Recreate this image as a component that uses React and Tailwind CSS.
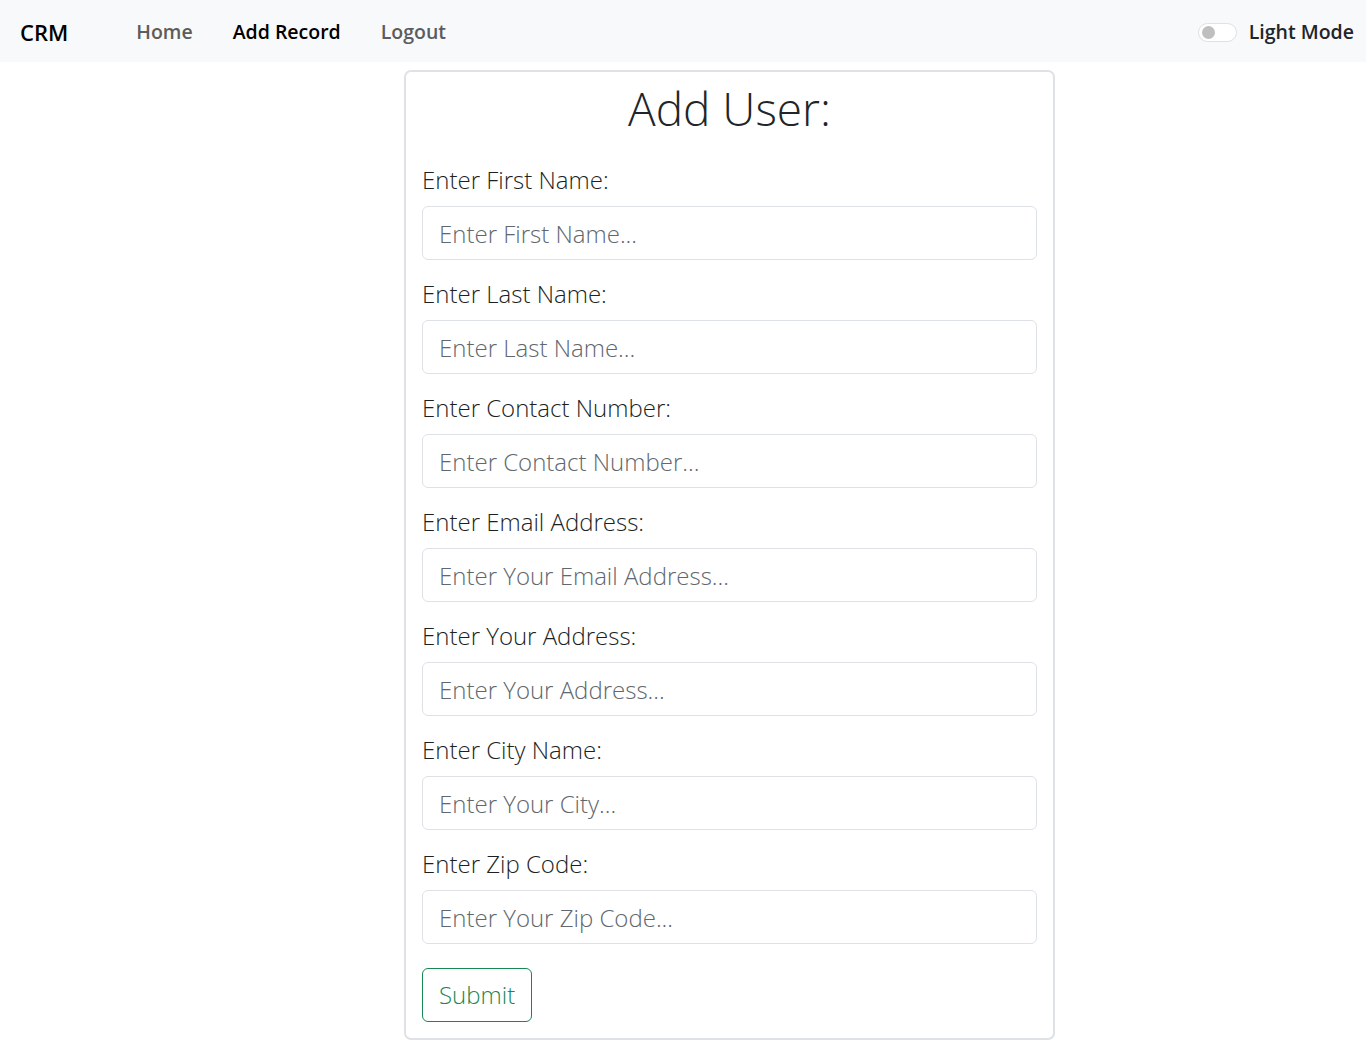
const fields = [
  { label: 'Enter First Name:', placeholder: 'Enter First Name...' },
  { label: 'Enter Last Name:', placeholder: 'Enter Last Name...' },
  { label: 'Enter Contact Number:', placeholder: 'Enter Contact Number...' },
  { label: 'Enter Email Address:', placeholder: 'Enter Your Email Address...' },
  { label: 'Enter Your Address:', placeholder: 'Enter Your Address...' },
  { label: 'Enter City Name:', placeholder: 'Enter Your City...' },
  { label: 'Enter Zip Code:', placeholder: 'Enter Your Zip Code...' },
];

export default function App() {
  return (
    <div className="min-h-screen bg-white text-[#212529] font-['Open_Sans',sans-serif]">
      {/* Navbar */}
      <nav className="h-[62px] bg-[#f8f9fa] flex items-center pl-5 pr-3 pt-[2px]">
        <span className="text-[22px] font-semibold text-black mr-[68px]">CRM</span>
        <a className="text-[19.5px] font-semibold text-[#5c5c5c] mr-[40px]">Home</a>
        <a className="text-[19.5px] font-semibold text-black mr-[40px]">Add Record</a>
        <a className="text-[19.5px] font-semibold text-[#5c5c5c]">Logout</a>
        <div className="ml-auto flex items-center gap-[12px]">
          <span className="w-[39px] h-[19px] rounded-full border border-[#dee2e6] bg-white flex items-center px-[3px]">
            <span className="w-[13px] h-[13px] rounded-full bg-[#bfbfbf]" />
          </span>
          <span className="text-[19.5px] font-semibold text-[#212529]">Light Mode</span>
        </div>
      </nav>

      {/* Card */}
      <div className="ml-[404px] mt-[8px] w-[651px] border-2 border-[#dee2e6] rounded-[7px] px-[16px] pb-[16px]">
        <h1 className="text-center text-[46px] font-light leading-[1.2] pt-[9px] pb-[26px]">Add User:</h1>
        <form className="flex flex-col">
          {fields.map((f) => (
            <div key={f.label} className="mb-[16px]">
              <label className="block text-[24px] font-light text-[#1c1f23] leading-[1.5] mb-[8px]">{f.label}</label>
              <input
                type="text"
                placeholder={f.placeholder}
                className="w-full h-[54px] px-[16px] text-[24px] font-light border border-[#dee2e6] rounded-[6px] placeholder:text-[#60676e] outline-none"
              />
            </div>
          ))}
          <div className="pt-[8px]">
            <button
              type="button"
              className="h-[54px] px-[16px] text-[24px] font-light text-[#198754] border border-[#198754] rounded-[6px] bg-white"
            >
              Submit
            </button>
          </div>
        </form>
      </div>
    </div>
  );
}
